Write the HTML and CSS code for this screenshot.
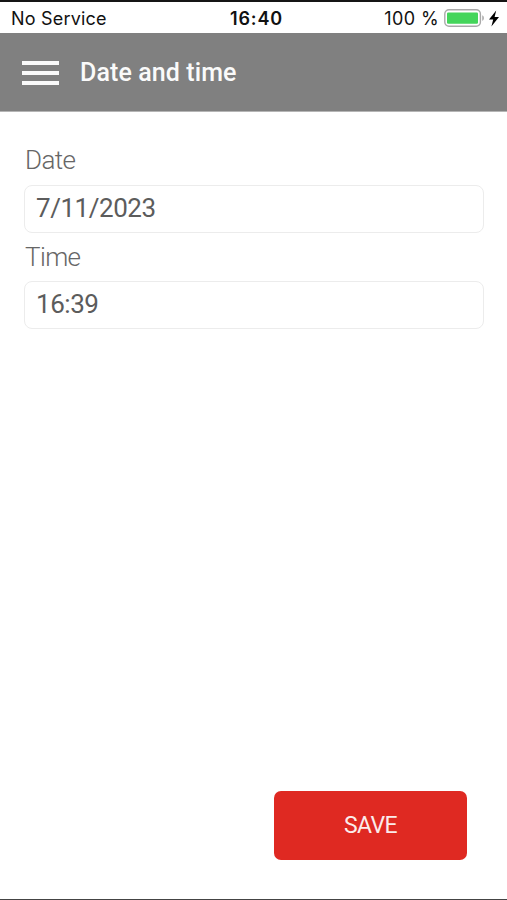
FILE: index.html
```html
<!DOCTYPE html>
<html lang="en">
<head>
  <meta charset="UTF-8" />
  <meta name="viewport" content="width=device-width, initial-scale=1.0"/>
  <title>Date and time</title>
  <link rel="stylesheet" href="styles.css">
</head>
<body>
  <div class="screen">
    <div class="status-bar">
      <span class="carrier">No Service</span>
      <span class="clock">16:40</span>
      <div class="power">
        <span class="percent">100 %</span>
        <svg class="battery" width="41" height="18" viewBox="0 0 41 18">
          <rect x="0.8" y="0.8" width="35.6" height="16.4" rx="4.2" fill="#fff" stroke="#a9a9a9" stroke-width="1.4"/>
          <rect x="3" y="3.4" width="31" height="11.4" rx="1.2" fill="#44d55b"/>
          <path d="M38.3 6.2c2 .8 2 4.8 0 5.6z" fill="#a0a0a0"/>
        </svg>
        <svg class="bolt" width="10" height="17" viewBox="0 0 10 17">
          <path d="M7.2 0.5L0 9.5h4.2L2.4 16.5L10 7H5.6z" fill="#000"/>
        </svg>
      </div>
    </div>

    <header class="header">
      <button class="menu" aria-label="Menu">
        <span></span>
        <span></span>
        <span></span>
      </button>
      <h1>Date and time</h1>
    </header>

    <form class="settings">
      <label for="date">Date</label>
      <input type="text" id="date" value="7/11/2023">
      <label for="time">Time</label>
      <input type="text" id="time" value="16:39">
      <button type="button" class="save">SAVE</button>
    </form>
  </div>
</body>
</html>
```

FILE: styles.css
```css
* {
  box-sizing: border-box;
}

body {
  margin: 0;
  font-family: Roboto, sans-serif;
  background: #fff;
}

.screen {
  display: flex;
  flex-direction: column;
  height: 900px;
  border-top: 2px solid #151515;
  border-bottom: 1px solid #444;
}

.status-bar {
  display: grid;
  grid-template-columns: 1fr auto 1fr;
  align-items: center;
  height: 31px;
  padding: 1px 8px 0 11px;
  font-family: Inter, sans-serif;
  font-size: 18px;
  line-height: 30px;
  color: #111;
}

.carrier {
  padding-top: 1px;
  letter-spacing: 0.2px;
}

.clock {
  padding: 1px 0 0 3px;
  font-weight: 600;
  letter-spacing: 0.9px;
}

.power {
  display: flex;
  align-items: center;
  justify-content: flex-end;
}

.percent {
  padding-top: 1px;
  letter-spacing: 0.4px;
}

.battery {
  margin: 0 4px 2px 5px;
}

.bolt {
  margin-bottom: 1px;
}

.header {
  display: flex;
  align-items: center;
  height: 79px;
  padding-left: 22px;
  background: #808080;
  border-bottom: 1px solid #b5b5b5;
}

.menu {
  display: flex;
  flex-direction: column;
  gap: 6px;
  width: 37px;
  margin-top: 2px;
  padding: 0;
  border: none;
  background: none;
}

.menu span {
  width: 100%;
  height: 4px;
  background: #fafafa;
}

h1 {
  margin: 0 0 0 21px;
  font-size: 25px;
  font-weight: 500;
  letter-spacing: 0.1px;
  color: #fafafa;
}

.settings {
  display: flex;
  flex-direction: column;
  flex: 1;
  padding: 24px 23px 39px 24px;
}

label {
  height: 49px;
  padding-left: 1px;
  font-size: 26px;
  font-weight: 300;
  letter-spacing: -0.6px;
  line-height: 49px;
  color: #666;
}

input {
  width: 100%;
  height: 48px;
  padding: 0 11px 2px;
  border: 1px solid #ececec;
  border-radius: 8px;
  font-family: inherit;
  font-size: 26px;
  letter-spacing: -0.45px;
  color: #5c5c5c;
  background: #fff;
}

/* the second row sits slightly closer */
input + label {
  height: 48px;
}

.save {
  align-self: flex-end;
  width: 193px;
  height: 69px;
  margin: auto 17px 0 0;
  border: none;
  border-radius: 7px;
  font-family: inherit;
  font-size: 23px;
  letter-spacing: -0.6px;
  color: #fbeceb;
  background: #df2922;
}
```
